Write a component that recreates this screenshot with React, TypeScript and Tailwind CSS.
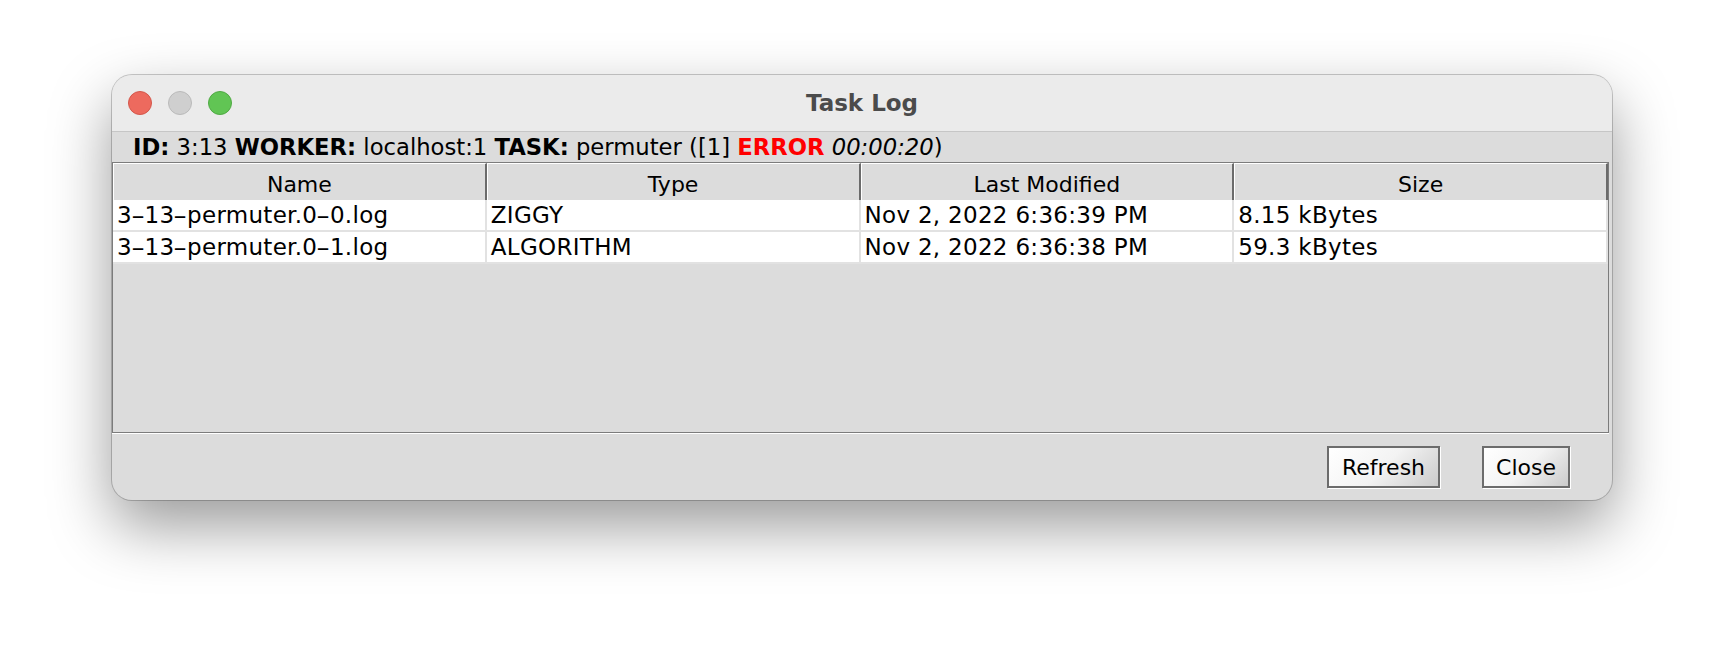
import React from "react";

const font = { fontFamily: '"DejaVu Sans", "Liberation Sans", sans-serif' };

const rows = [
  ["3-13-permuter.0-0.log", "ZIGGY", "Nov 2, 2022 6:36:39 PM", "8.15 kBytes"],
  ["3-13-permuter.0-1.log", "ALGORITHM", "Nov 2, 2022 6:36:38 PM", "59.3 kBytes"],
];
const headers = ["Name", "Type", "Last Modified", "Size"];

function CellText({ text }: { text: string }) {
  const parts = text.split("-");
  return (
    <>
      {parts.map((p, i) => (
        <React.Fragment key={i}>
          {i > 0 && <span className="inline-block mx-[2px] scale-x-[1.7]">-</span>}
          {p}
        </React.Fragment>
      ))}
    </>
  );
}

function Btn({ label, w }: { label: string; w: string }) {
  return (
    <div
      className={`${w} h-[42px] flex items-center justify-center border-2 border-[#6c6c6c] bg-[linear-gradient(135deg,#ffffff_0%,#f3f3f3_50%,#cbcbcb_100%)] shadow-[1px_1px_0_#ffffff] text-[22px] text-black`}
    >
      {label}
    </div>
  );
}

export default function App() {
  return (
    <div className="w-[1724px] h-[648px] bg-white pl-[112px] pt-[75px]" style={font}>
      <div className="w-[1500px] h-[425px] rounded-[20px] overflow-hidden bg-[#dcdcdc] flex flex-col shadow-[0_0_0_1px_rgba(0,0,0,0.2),0_26px_62px_rgba(0,0,0,0.4)]">
        {/* title bar */}
        <div className="relative h-[57px] shrink-0 bg-[#ebebeb] border-b border-[#c6c6c6] flex items-center">
          <div className="flex items-center gap-[16px] pl-[16px]">
            <div className="w-[24px] h-[24px] rounded-full bg-[#ed6a5e] border border-[#d3574b]" />
            <div className="w-[24px] h-[24px] rounded-full bg-[#cfcfcf] border border-[#bababa]" />
            <div className="w-[24px] h-[24px] rounded-full bg-[#61c554] border border-[#50a944]" />
          </div>
          <div className="absolute inset-0 flex items-center justify-center text-[23px] font-bold text-[#4b4b4b]">
            Task Log
          </div>
        </div>
        {/* info bar */}
        <div className="h-[30px] shrink-0 flex items-center pl-[21px] pt-[1px] text-[22.7px] text-black whitespace-pre">
          <span className="font-bold">ID:</span>
          <span> 3:13 </span>
          <span className="font-bold">WORKER:</span>
          <span> localhost:1 </span>
          <span className="font-bold">TASK:</span>
          <span> permuter ([1] </span>
          <span className="font-bold text-[#ff0000]">ERROR</span>
          <span> </span>
          <span className="italic">00:00:20</span>
          <span>)</span>
        </div>
        {/* table frame */}
        <div className="h-[271px] shrink-0 mr-[3px] border border-[#7c7c7c] shadow-[0_1px_0_#ffffff] bg-[#dcdcdc] flex flex-col">
          <div className="grid grid-cols-4 h-[37px] shrink-0">
            {headers.map((h) => (
              <div
                key={h}
                className="flex items-center justify-center pt-[4px] border-t border-t-white border-l border-l-white border-r-2 border-r-[#6b6b6b] border-b-2 border-b-[#6b6b6b] text-[22px] text-black bg-[#dcdcdc]"
              >
                {h}
              </div>
            ))}
          </div>
          {rows.map((r, i) => (
            <div key={i} className="grid grid-cols-4 h-[32px] shrink-0">
              {r.map((c, j) => (
                <div
                  key={j}
                  className="bg-white border-b-2 border-r-2 border-[#e2e2e2] flex items-center pl-[4px] pt-[1px] text-[23px] tracking-[0.3px] text-black whitespace-pre overflow-hidden"
                >
                  <CellText text={c} />
                </div>
              ))}
            </div>
          ))}
        </div>
        {/* buttons */}
        <div className="flex justify-end gap-[42px] pr-[42px] pt-[13px]">
          <Btn label="Refresh" w="w-[113px]" />
          <Btn label="Close" w="w-[88px]" />
        </div>
      </div>
    </div>
  );
}
